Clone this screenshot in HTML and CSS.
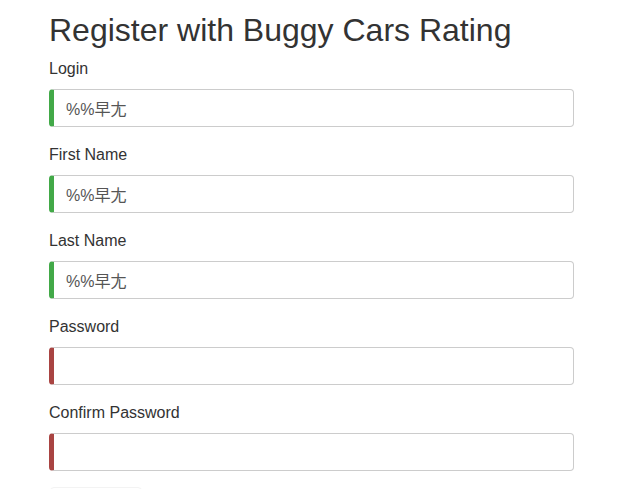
FILE: index.html
```html
<!DOCTYPE html>
<html>
<head>
<meta charset="utf-8">
<link rel="stylesheet" href="styles.css">
</head>
<body>
<div class="page">
  <h2 class="title">Register with Buggy Cars Rating</h2>
  <form class="form">
    <div class="form-group">
      <label class="label" for="login">Login</label>
      <input class="input valid" id="login" type="text" value="%%早尢">
    </div>
    <div class="form-group">
      <label class="label" for="first">First Name</label>
      <input class="input valid" id="first" type="text" value="%%早尢">
    </div>
    <div class="form-group">
      <label class="label" for="last">Last Name</label>
      <input class="input valid" id="last" type="text" value="%%早尢">
    </div>
    <div class="form-group">
      <label class="label" for="pw">Password</label>
      <input class="input invalid" id="pw" type="password">
    </div>
    <div class="form-group">
      <label class="label" for="cpw">Confirm Password</label>
      <input class="input invalid" id="cpw" type="password">
    </div>
    <div class="btn" aria-hidden="true"></div>
  </form>
</div>
</body>
</html>
```

FILE: styles.css
```css
html, body {
  margin: 0;
  padding: 0;
  background: #fff;
}
body {
  font-family: "Liberation Sans", Arial, "Noto Sans CJK SC", sans-serif;
  font-size: 16px;
  line-height: 1.5;
  color: #333;
}
.page {
  width: 525px;
  margin-left: 49px;
  padding-top: 11px;
}
.title {
  font-size: 32px;
  font-weight: 500;
  line-height: 38px;
  margin: 0 0 8px;
  color: #333;
}
.form {
  display: flex;
  flex-direction: column;
}
.form-group {
  display: flex;
  flex-direction: column;
  margin-bottom: 16px;
}
.label {
  display: block;
  margin-bottom: 8px;
  line-height: 24px;
}
.input {
  box-sizing: border-box;
  display: block;
  width: 100%;
  height: 38px;
  padding: 6px 12px;
  font-family: "Liberation Sans", Arial, "Noto Sans CJK SC", sans-serif;
  font-size: 16px;
  line-height: 24px;
  color: #555;
  background: #fff;
  border: 1px solid #ccc;
  border-radius: 4px;
  outline: none;
}
.valid {
  border-left: 5px solid #42a948;
}
.invalid {
  border-left: 5px solid #a94442;
}
.btn {
  align-self: flex-start;
  margin-left: 1px;
  width: 90px;
  height: 38px;
  background: #fff;
  border: 1px solid #f3f3f3;
  border-radius: 4px;
}
```
